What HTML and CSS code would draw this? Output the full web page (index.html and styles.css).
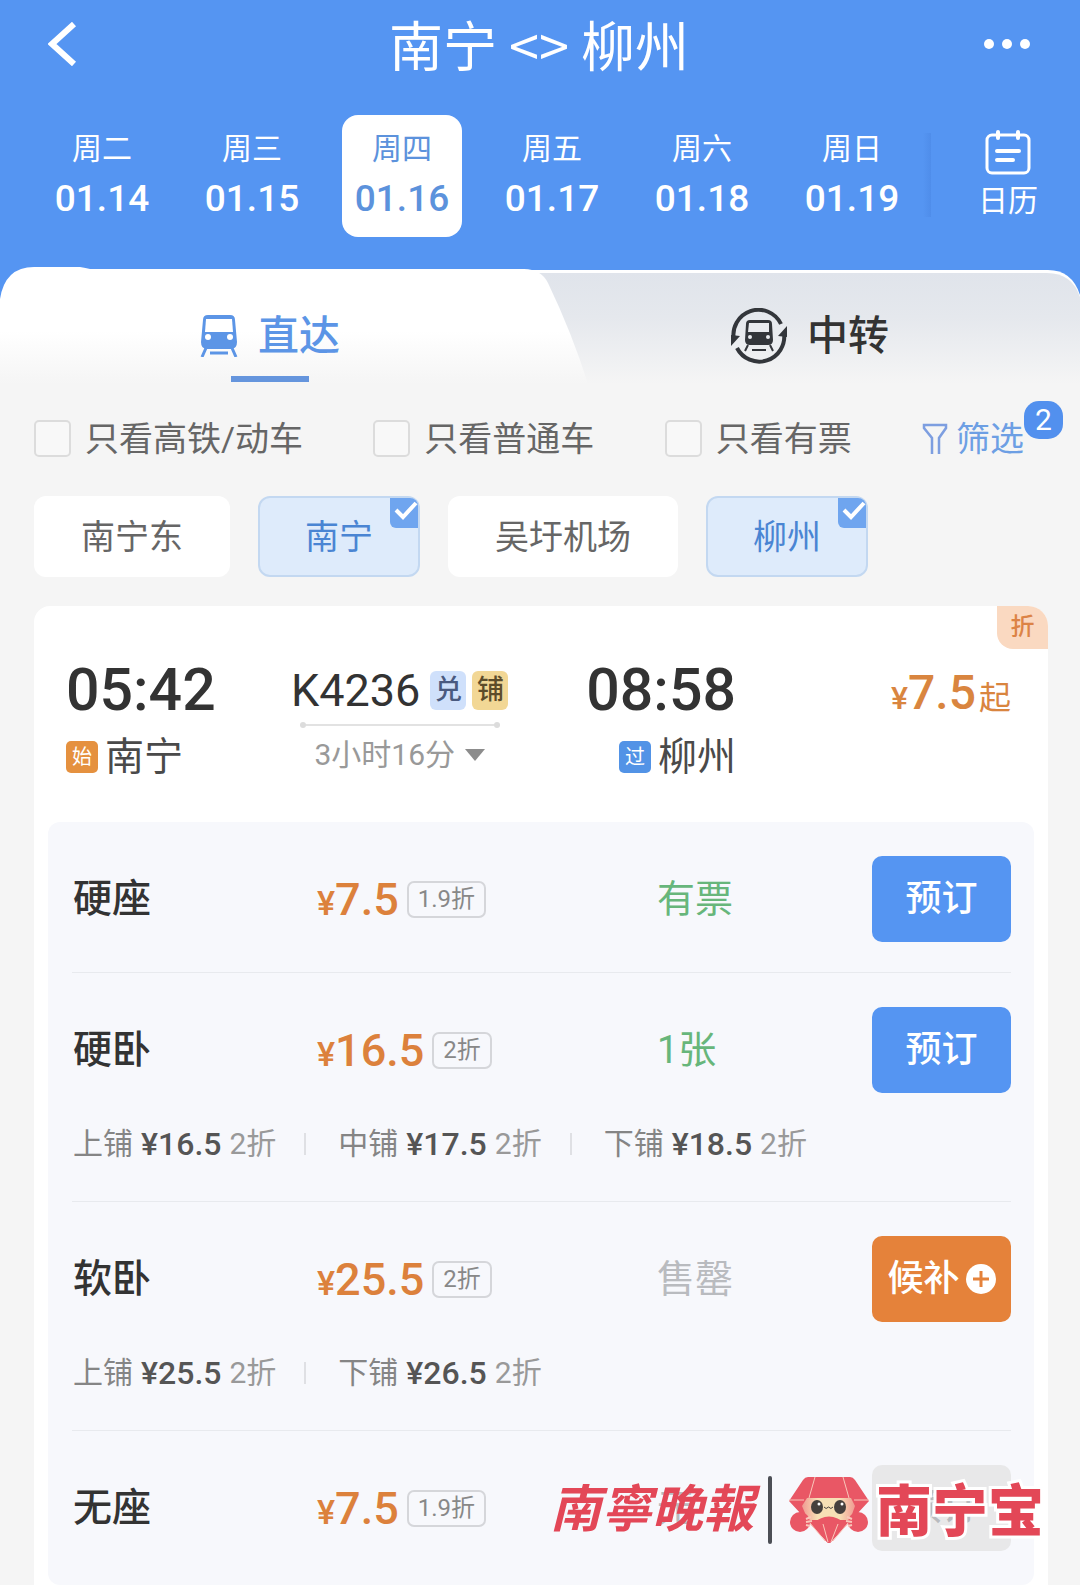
FILE: index.html
```html
<!DOCTYPE html>
<html lang="zh-CN">
<head>
  <meta charset="utf-8">
  <meta name="viewport" content="width=device-width, initial-scale=1">
  <title>南宁 - 柳州 车票</title>
  <link rel="stylesheet" href="styles.css">
</head>
<body>
  <header class="header">
    <div class="topbar">
      <button class="icon-btn" aria-label="返回">
        <svg width="30" height="44" viewBox="0 0 30 44"><path d="M26 2 4 22l22 20" fill="none" stroke="#fff" stroke-width="6"/></svg>
      </button>
      <h1>南宁 &lt;&gt; 柳州</h1>
      <button class="icon-btn" aria-label="更多">
        <svg width="46" height="10" viewBox="0 0 46 10" fill="#fff"><circle cx="5" cy="5" r="5"/><circle cx="23" cy="5" r="5"/><circle cx="41" cy="5" r="5"/></svg>
      </button>
    </div>

    <div class="date-bar">
      <div class="dates">
        <button class="date"><span class="week">周二</span><span class="day">01.14</span></button>
        <button class="date"><span class="week">周三</span><span class="day">01.15</span></button>
        <button class="date active"><span class="week">周四</span><span class="day">01.16</span></button>
        <button class="date"><span class="week">周五</span><span class="day">01.17</span></button>
        <button class="date"><span class="week">周六</span><span class="day">01.18</span></button>
        <button class="date"><span class="week">周日</span><span class="day">01.19</span></button>
      </div>
      <div class="date-divider"></div>
      <button class="calendar">
        <svg width="46" height="46" viewBox="0 0 46 46" fill="none" stroke="#fff" stroke-width="3" stroke-linecap="round"><rect x="2" y="6" width="42" height="38" rx="5"/><path d="M13 3v6M33 3v6M12 22h22M12 31h16" stroke-width="4"/></svg>
        <span>日历</span>
      </button>
    </div>
  </header>

  <nav class="tabs">
    <svg class="tabs-bg" viewBox="0 0 1080 117" preserveAspectRatio="none">
      <defs>
        <linearGradient id="tab-on" x1="0" y1="0" x2="0" y2="1"><stop offset=".55" stop-color="#fff"/><stop offset="1" stop-color="#f5f5f5"/></linearGradient>
        <linearGradient id="tab-off" x1="0" y1="0" x2="0" y2="1"><stop offset="0" stop-color="#e0e4eb"/><stop offset=".4" stop-color="#e5e8ed"/><stop offset="1" stop-color="#f5f5f5"/></linearGradient>
      </defs>
      <path d="M500 3H1048Q1072 3 1080 28V117H500z" fill="#fff"/>
      <path d="M500 6H1047Q1072 6 1080 30V117H500z" fill="url(#tab-off)"/>
      <path d="M0 32Q5 0 34 0H80Q86 1 90 2H524Q541 2 548 16 572 66 588 117H0z" fill="url(#tab-on)"/>
    </svg>
    <button class="tab active">
      <span class="tab-label">
        <svg width="38" height="42" viewBox="0 0 38 42"><path d="M8 0h22q5 0 5 5l2 22q0 7-6 7H7q-6 0-6-7L3 5q0-5 5-5z" fill="#5c95e6"/><path d="M6 4h26l1 13H5z" fill="#fff"/><circle cx="8" cy="22" r="3" fill="#fff"/><circle cx="30" cy="22" r="3" fill="#fff"/><path d="M6 33l-4 9M32 33l4 9M10 38h18" stroke="#5c95e6" stroke-width="3" fill="none"/></svg>
        直达
      </span>
    </button>
    <button class="tab">
      <span class="tab-label">
        <svg width="56" height="56" viewBox="0 0 56 56"><path d="M3 32A25 25 0 0 1 50 16M53 25A25 25 0 0 1 6 40" fill="none" stroke="#33363b" stroke-width="4"/><path d="M0 38V27l9 1zM56 18v11l-9-1z" fill="#33363b"/><path d="M19 12h18q4 0 4 4l1 16q0 5-5 5H19q-5 0-5-5l1-16q0-4 4-4z" fill="#33363b"/><path d="M18 15h20v9H17z" fill="#e9ebef"/><circle cx="19" cy="29" r="2" fill="#e9ebef"/><circle cx="37" cy="29" r="2" fill="#e9ebef"/><path d="M17 37l-3 6M39 37l3 6M21 42h14" stroke="#33363b" stroke-width="2" fill="none"/></svg>
        中转
      </span>
    </button>
  </nav>

  <div class="filters">
    <label class="check"><input type="checkbox">只看高铁/动车</label>
    <label class="check"><input type="checkbox">只看普通车</label>
    <label class="check"><input type="checkbox">只看有票</label>
    <button class="filter-btn">
      <svg width="26" height="32" viewBox="0 0 26 32"><path d="M10 31V15L2 5V2h22v3l-7 10v16" fill="none" stroke="#7d9ee0" stroke-width="2.500"/></svg>
      筛选
      <span class="count">2</span>
    </button>
  </div>

  <div class="stations">
    <button class="chip">南宁东</button>
    <button class="chip selected">南宁<span class="tick"><svg width="28" height="30" viewBox="0 0 28 30"><path d="M6 12l7 7L26 5" fill="none" stroke="#fff" stroke-width="4"/></svg></span></button>
    <button class="chip">吴圩机场</button>
    <button class="chip selected">柳州<span class="tick"><svg width="28" height="30" viewBox="0 0 28 30"><path d="M6 12l7 7L26 5" fill="none" stroke="#fff" stroke-width="4"/></svg></span></button>
  </div>

  <main class="card">
    <span class="corner">折</span>

    <section class="trip">
      <div class="depart">
        <div class="time">05:42</div>
        <div class="station"><span class="mark start">始</span>南宁</div>
      </div>
      <div class="middle">
        <div class="train-no">K4236 <span class="badge blue">兑</span><span class="badge gold">铺</span></div>
        <div class="line"></div>
        <button class="duration">3小时16分 <span class="arrow"></span></button>
      </div>
      <div class="arrive">
        <div class="time">08:58</div>
        <div class="station"><span class="mark pass">过</span>柳州</div>
      </div>
      <div class="from-price"><small>¥</small>7.5<span class="up">起</span></div>
    </section>

    <section class="seats">
      <div class="seat">
        <div class="seat-row">
          <span class="name">硬座</span>
          <span class="price"><small>¥</small>7.5<span class="off">1.9折</span></span>
          <span class="status ok">有票</span>
          <button class="book">预订</button>
        </div>
      </div>

      <div class="seat has-berths">
        <div class="seat-row">
          <span class="name">硬卧</span>
          <span class="price"><small>¥</small>16.5<span class="off">2折</span></span>
          <span class="status ok">1张</span>
          <button class="book">预订</button>
        </div>
        <div class="berths">
          <span class="berth">上铺 <b>¥16.5</b> <i>2折</i></span>
          <span class="berth">中铺 <b>¥17.5</b> <i>2折</i></span>
          <span class="berth">下铺 <b>¥18.5</b> <i>2折</i></span>
        </div>
      </div>

      <div class="seat has-berths">
        <div class="seat-row">
          <span class="name">软卧</span>
          <span class="price"><small>¥</small>25.5<span class="off">2折</span></span>
          <span class="status none">售罄</span>
          <button class="book wait">候补<svg width="30" height="30" viewBox="0 0 30 30"><circle cx="15" cy="15" r="15" fill="#fff"/><path d="M15 7v16M7 15h16" stroke="#e5823a" stroke-width="3"/></svg></button>
        </div>
        <div class="berths">
          <span class="berth">上铺 <b>¥25.5</b> <i>2折</i></span>
          <span class="berth">下铺 <b>¥26.5</b> <i>2折</i></span>
        </div>
      </div>

      <div class="seat">
        <div class="seat-row">
          <span class="name">无座</span>
          <span class="price"><small>¥</small>7.5<span class="off">1.9折</span></span>
          <span class="status none">无</span>
          <button class="book" disabled>预订</button>
        </div>
      </div>
    </section>

    <div class="watermark">
      <span class="paper">南寧晚報</span>
      <span class="bar"></span>
      <svg width="82" height="68" viewBox="0 0 82 68">
        <defs><linearGradient id="face" x1="0" x2="1" y1="0" y2="0"><stop offset="0" stop-color="#f09a92"/><stop offset=".3" stop-color="#f7e0b5"/><stop offset=".7" stop-color="#f7e0b5"/><stop offset="1" stop-color="#f09a92"/></linearGradient></defs>
        <path d="M20 1h42q3 0 5 3l14 21-37 40q-3 4-6 0L1 25 15 4q2-3 5-3z" fill="#e95765"/>
        <path d="M19 22h44l4 8-5 14H20l-6-14z" fill="url(#face)"/>
        <path d="M24 48q17-15 34 0L44 65q-3 4-6 0z" fill="#e95765"/>
        <path d="M27 1l-6 21M55 1l6 21M1 24h15M66 24h15M22 47l15 18M60 47L45 65M35 48l5 18M50 48l-7 18" stroke="#f9c7ba" fill="none"/>
        <circle cx="12" cy="46" r="10" fill="#e95765"/><circle cx="70" cy="46" r="10" fill="#e95765"/>
        <path d="M23 41l-5 2M24 45l-6 1M22 50l-4-1M59 41l5 2M58 45l6 1M60 50l4-1" stroke="#f9c7ba" stroke-width="2"/>
        <ellipse cx="29" cy="31" rx="6" ry="7" fill="#46403d"/><ellipse cx="52" cy="31" rx="6" ry="7" fill="#46403d"/>
        <circle cx="31" cy="28" r="1.500" fill="#fff"/><circle cx="54" cy="28" r="1.500" fill="#fff"/>
        <path d="M36 31q2 3 4.500 0 2.500 3 4.500 0" stroke="#46403d" fill="none"/>
      </svg>
      <span class="brand">南宁宝</span>
    </div>
  </main>
</body>
</html>
```

FILE: styles.css
```css
* {
  box-sizing: border-box;
}

body {
  margin: 0;
  background-color: #f5f5f5;
  color: #333;
  font-family: Roboto, "Noto Sans CJK SC", sans-serif;
}

button {
  padding: 0;
  border: none;
  background: none;
  color: inherit;
  font: inherit;
  cursor: pointer;
}

svg {
  display: block;
  flex: none;
}

/* header */
.header {
  background-color: #5595f2;
  color: #fff;
}

.topbar {
  display: flex;
  align-items: center;
  justify-content: space-between;
  height: 88px;
  padding: 0 50px 0 48px;
}

.topbar h1 {
  margin: 0;
  font-family: "Noto Sans CJK SC", sans-serif;
  font-size: 54px;
  font-weight: 400;
  line-height: 56px;
}

.icon-btn {
  display: flex;
  width: 46px;
}

.date-bar {
  display: flex;
  padding: 27px 42px 30px;
}

.dates {
  display: grid;
  grid-template-columns: repeat(6, 1fr);
  gap: 30px;
  flex: 1;
}

.date {
  display: flex;
  flex-direction: column;
  align-items: center;
  gap: 6px;
  height: 122px;
  padding-top: 14px;
  border-radius: 16px;
}

.date.active {
  background-color: #fff;
  color: #5c92dc;
}

.week {
  font-size: 30px;
  line-height: 40px;
}

.day {
  font-size: 37px;
  font-weight: 500;
  line-height: 48px;
}

.date-divider {
  width: 8px;
  height: 84px;
  margin: 18px 47px 0 11px;
  background: linear-gradient(to right, #5595f2, #4f8dea);
}

.calendar {
  display: flex;
  flex-direction: column;
  align-items: center;
  gap: 6px;
  width: 60px;
  padding-top: 14px;
  font-size: 30px;
  line-height: 40px;
}

/* tabs */
.tabs {
  position: relative;
  display: grid;
  grid-template-columns: 1fr 1fr;
  background: linear-gradient(#5595f2 36px, #f5f5f5 36px);
}

.tabs-bg {
  position: absolute;
  width: 100%;
  height: 100%;
}

.tab {
  position: relative;
  display: flex;
  flex-direction: column;
  align-items: center;
  gap: 15px;
  padding: 44px 0 2px;
  font-size: 41px;
  font-weight: 500;
  line-height: 50px;
}

.tab::after {
  content: "";
  width: 78px;
  height: 6px;
}

.tab-label {
  display: flex;
  align-items: center;
  gap: 20px;
  height: 50px;
}

.tab.active {
  color: #5c95e6;
}

.tab.active::after {
  background-color: #6595dd;
}

/* filters */
.filters {
  display: flex;
  align-items: center;
  justify-content: space-between;
  padding: 36px 56px 0 34px;
  color: #666;
  font-size: 34px;
  line-height: 36px;
}

.check {
  display: flex;
  align-items: center;
  gap: 14px;
}

.check input {
  appearance: none;
  width: 37px;
  height: 37px;
  margin: 0;
  border: 2px solid #dcdcdc;
  border-radius: 5px;
  background-color: #f8f8f8;
}

.filter-btn {
  position: relative;
  display: flex;
  align-items: center;
  gap: 8px;
  color: #6d9fe4;
}

.count {
  position: absolute;
  left: 100%;
  bottom: 18px;
  width: 39px;
  border-radius: 15px;
  background-color: #5290ee;
  color: #fff;
  font-size: 30px;
  line-height: 38px;
  text-align: center;
}

.stations {
  display: flex;
  gap: 28px;
  margin: 39px 34px 29px;
}

.chip {
  position: relative;
  height: 81px;
  padding: 0 47px;
  border-radius: 12px;
  background-color: #fff;
  color: #666;
  font-size: 34px;
  line-height: 36px;
}

.chip.selected {
  padding: 0 45px;
  border: 2px solid #c3d8f1;
  background-color: #deebfb;
  color: #4a85d3;
}

.tick {
  position: absolute;
  top: 0;
  right: 0;
  border-radius: 0 8px 0 6px;
  background-color: #6fa5ef;
}

/* train card */
.card {
  position: relative;
  margin: 0 32px 0 34px;
  padding: 54px 14px 0;
  border-radius: 16px 20px 0 0;
  background-color: #fff;
}

.corner {
  position: absolute;
  top: 0;
  right: 0;
  width: 51px;
  border-radius: 0 20px 0 16px;
  background-color: #fad9c1;
  color: #dc8346;
  font-size: 24px;
  font-weight: 500;
  line-height: 43px;
  text-align: center;
}

.trip {
  display: grid;
  grid-template-columns: 225fr 235fr 210fr 275fr;
  padding: 0 23px 46px 18px;
}

.time {
  font-size: 59px;
  font-weight: 500;
  line-height: 60px;
}

.station {
  display: flex;
  align-items: center;
  gap: 7px;
  margin-top: 18px;
  color: #4a4a4a;
  font-size: 39px;
  line-height: 38px;
}

.mark {
  width: 32px;
  border-radius: 5px;
  color: #fff;
  font-size: 20px;
  line-height: 32px;
  text-align: center;
}

.mark.start {
  background-color: #e5913f;
}

.mark.pass {
  background-color: #5293e6;
}

.middle {
  display: flex;
  flex-direction: column;
  align-items: center;
  justify-self: start;
}

.train-no {
  display: flex;
  align-items: center;
  gap: 6px;
  height: 60px;
  font-size: 45px;
}

.badge {
  width: 36px;
  border-radius: 6px;
  font-size: 27px;
  font-weight: 500;
  line-height: 39px;
  text-align: center;
}

.badge.blue {
  margin-left: 4px;
  background-color: #cfe0fb;
  color: #4a5a80;
}

.badge.gold {
  background-color: #f2d795;
  color: #5d4c2a;
}

.line {
  position: relative;
  width: 200px;
  height: 2px;
  margin-top: 4px;
  background-color: #e2e2e2;
}

.line::before,
.line::after {
  content: "";
  position: absolute;
  top: -2px;
  left: 0;
  width: 6px;
  height: 6px;
  border-radius: 50%;
  background-color: #dcdcdc;
}

.line::after {
  right: 0;
  left: auto;
}

.duration {
  display: flex;
  align-items: center;
  gap: 10px;
  margin-top: 14px;
  color: #999;
  font-size: 30px;
  line-height: 30px;
}

.arrow {
  border: 10px solid transparent;
  border-top: 12px solid #8c8c8c;
  border-bottom: none;
}

.arrive {
  display: flex;
  flex-direction: column;
  align-items: flex-end;
}

.from-price {
  color: #d9853f;
  font-size: 48px;
  font-weight: 500;
  line-height: 66px;
  text-align: right;
}

.from-price small {
  font-size: 32px;
}

.up {
  margin-left: 3px;
  font-size: 32px;
  font-weight: 400;
}

/* seat list */
.seats {
  padding: 0 23px 4px 24px;
  border-radius: 12px;
  background-color: #f7f8fc;
}

.seat {
  padding: 34px 0 30px;
  border-bottom: 1px solid #e8eaee;
}

.seat.has-berths {
  padding-bottom: 39px;
}

.seat:last-child {
  border-bottom: none;
}

.seat-row {
  display: grid;
  grid-template-columns: 245fr 340fr 215fr 139px;
  align-items: center;
}

.name {
  padding-left: 1px;
  font-size: 39px;
  font-weight: 500;
  line-height: 40px;
}

.price {
  display: flex;
  align-items: baseline;
  color: #dc813c;
  font-size: 45px;
  font-weight: 500;
}

.price small {
  font-size: 34px;
}

.off {
  align-self: center;
  margin-left: 8px;
  padding: 0 9px;
  border: 2px solid #d5d6da;
  border-radius: 7px;
  color: #888;
  font-size: 24px;
  font-weight: 400;
  line-height: 33px;
}

.status {
  font-size: 38px;
  line-height: 40px;
}

.status.ok {
  color: #67b67b;
}

.status.none {
  color: #b9bbbf;
}

.book {
  display: flex;
  align-items: center;
  justify-content: center;
  gap: 6px;
  height: 86px;
  border-radius: 10px;
  background-color: #5595f2;
  color: #fff;
  font-size: 36px;
  font-weight: 500;
  line-height: 40px;
}

.book.wait {
  background-color: #e5823a;
}

.book:disabled {
  background-color: #e8e8e9;
  color: #b9bbbf;
}

.berths {
  display: flex;
  margin-top: 33px;
  padding-left: 1px;
  color: #858585;
  font-size: 30px;
  line-height: 36px;
}

.berth {
  display: flex;
  align-items: center;
  gap: 8px;
}

.berth + .berth::before {
  content: "";
  width: 2px;
  height: 22px;
  margin: 0 24px 0 28px;
  background-color: #dfe0e4;
}

.berth b {
  color: #555;
  font-size: 32px;
  font-weight: 500;
}

.berth i {
  color: #999;
  font-style: normal;
}

/* newspaper watermark over the last row */
.watermark {
  position: absolute;
  right: 4px;
  bottom: 41px;
  display: flex;
  align-items: center;
  color: #e34757;
}

.paper {
  padding-bottom: 10px;
  font-family: "Noto Sans CJK SC", sans-serif;
  font-size: 51px;
  font-style: italic;
  font-weight: 700;
  line-height: 52px;
}

.bar {
  width: 4px;
  height: 68px;
  margin: 0 16px 0 14px;
  border-radius: 2px;
  background-color: #4c4f55;
}

.brand {
  margin-left: 6px;
  padding-bottom: 6px;
  font-family: "Noto Sans CJK SC", sans-serif;
  font-size: 56px;
  font-weight: 900;
  line-height: 60px;
  -webkit-text-stroke: 6px #fff;
  paint-order: stroke fill;
}
```
